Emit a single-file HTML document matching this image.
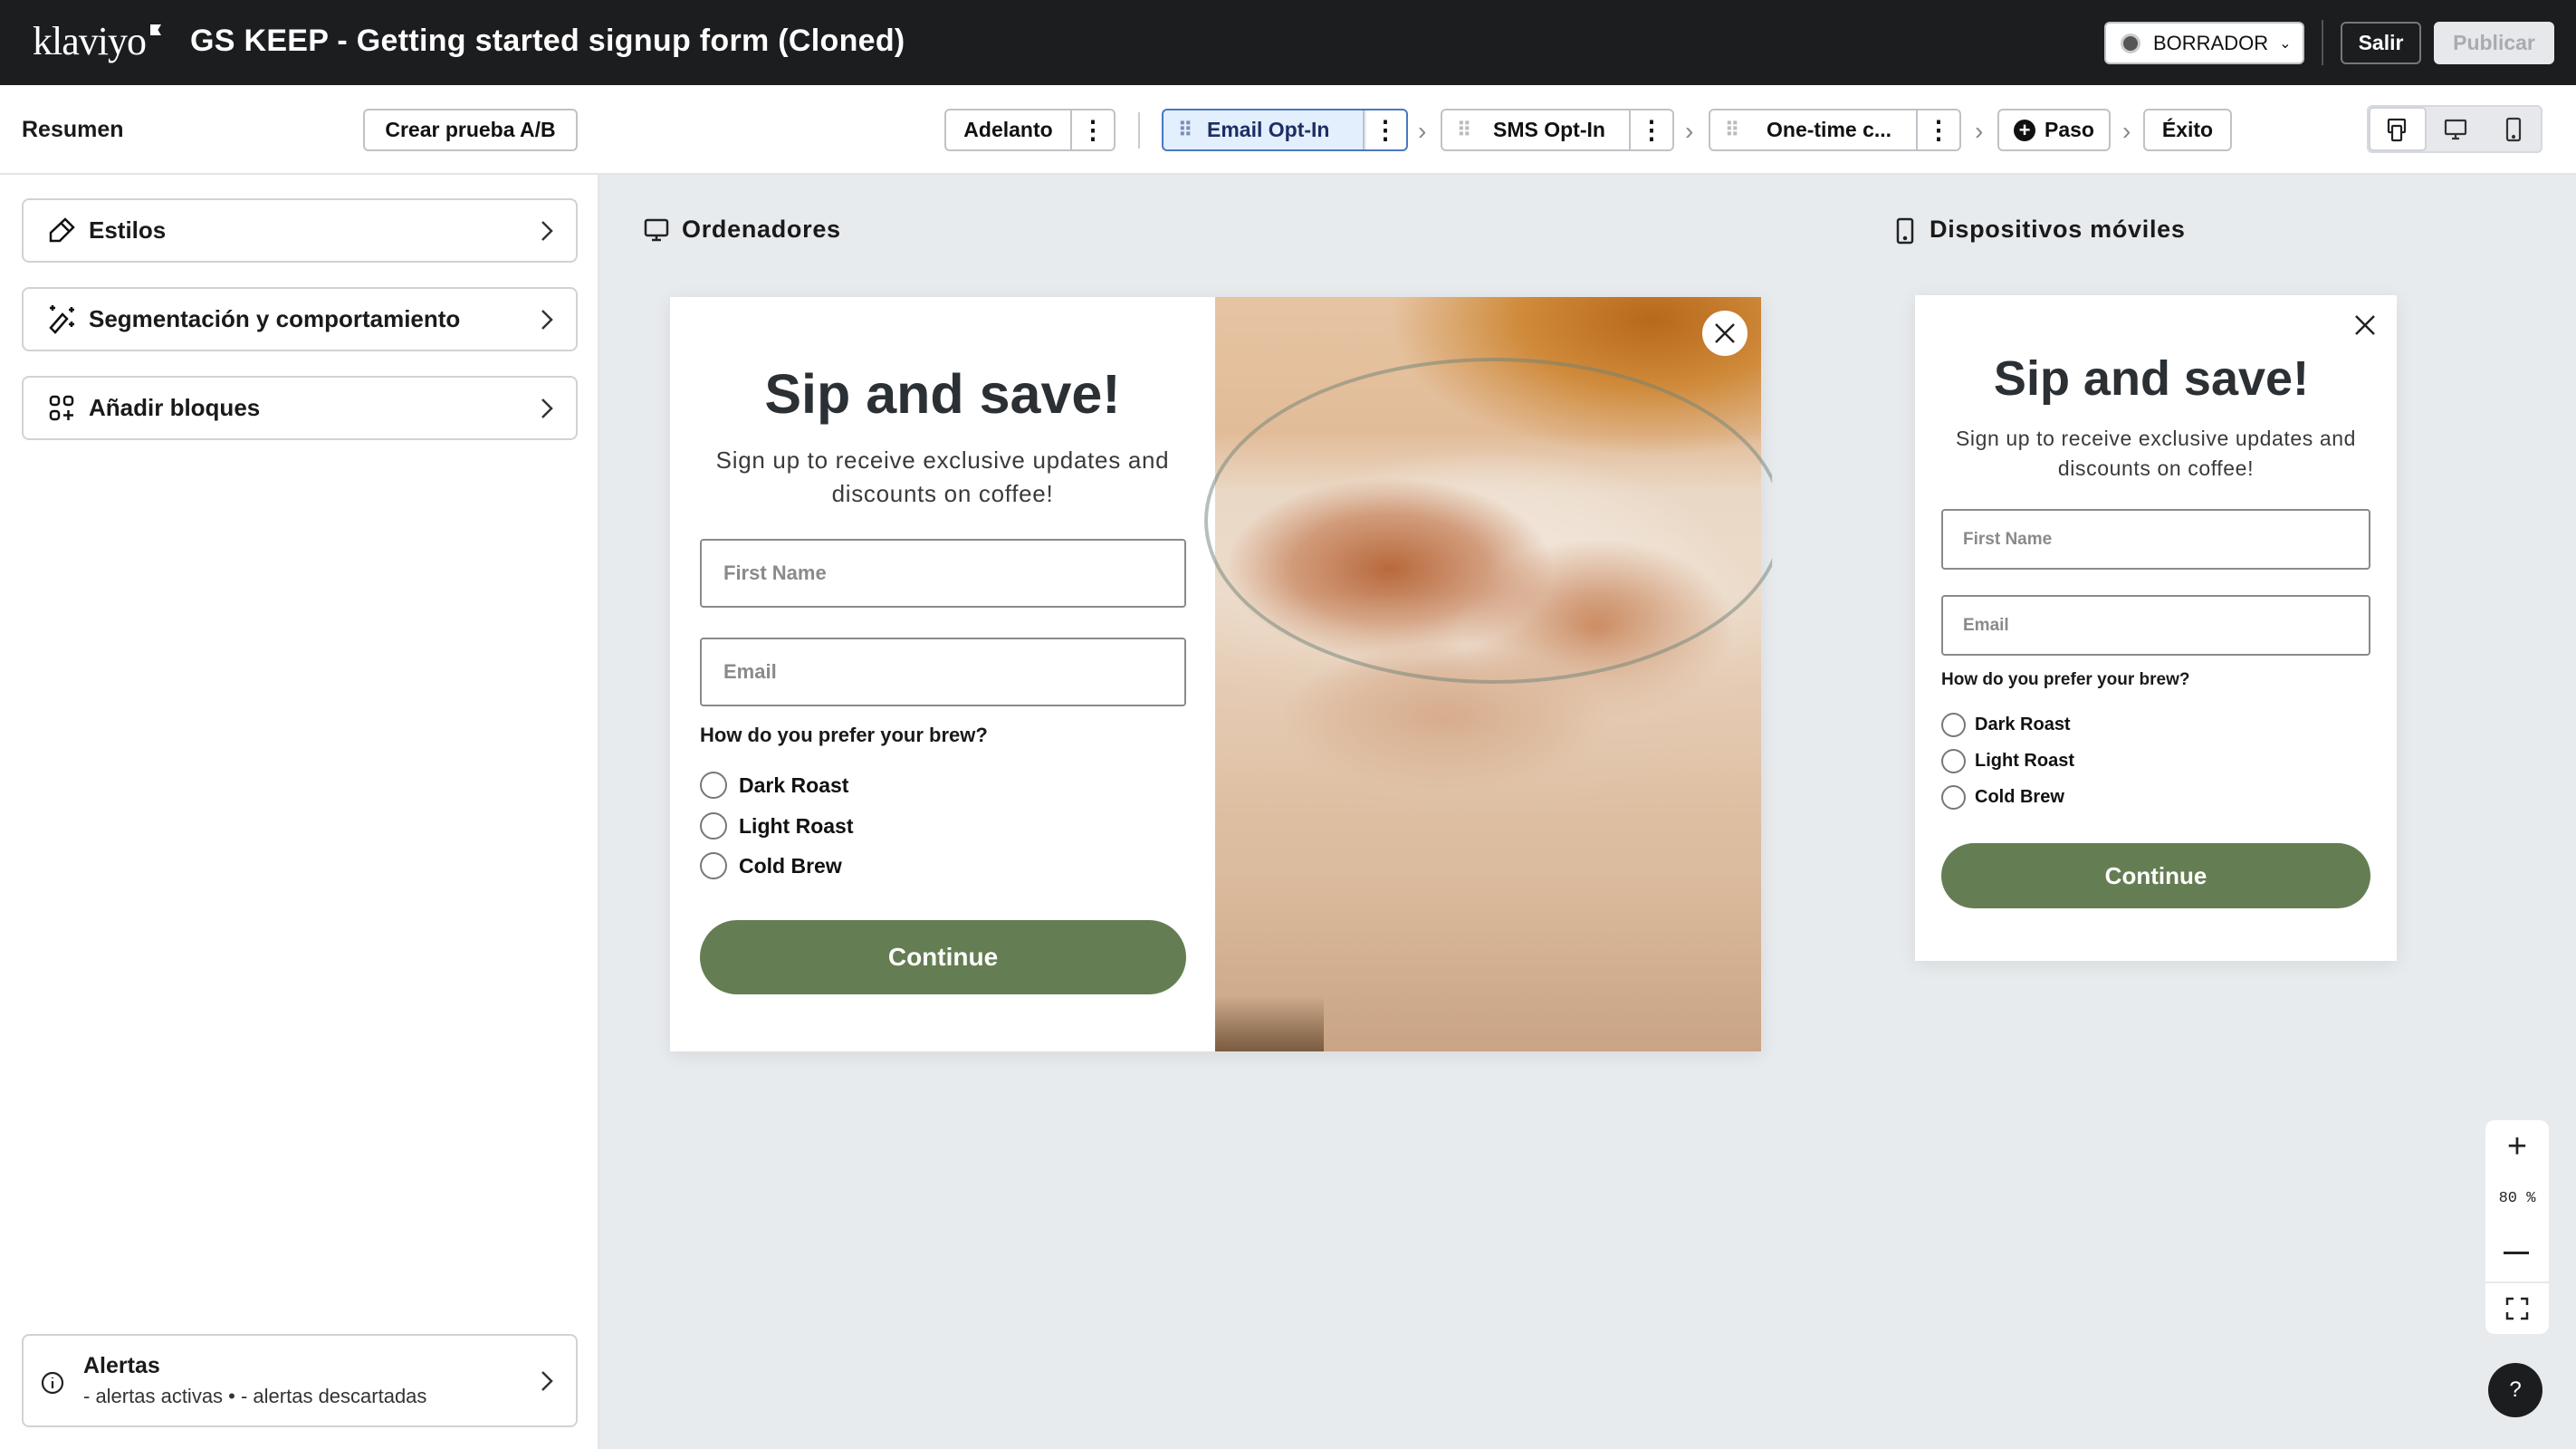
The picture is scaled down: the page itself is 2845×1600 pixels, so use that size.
<!DOCTYPE html>
<html><head><meta charset="utf-8"><style>
*{box-sizing:border-box;margin:0;padding:0}
body{width:2845px;height:1600px;overflow:hidden;background:#e8ebee;font-family:"Liberation Sans",sans-serif;position:relative;color:#1a1a1a}
.a{position:absolute}
.hdr{left:0;top:0;width:2845px;height:94px;background:#1c1d1f}
.tb{left:0;top:94px;width:2845px;height:99px;background:#fff;border-bottom:2px solid #e2e4e7}
.side{left:0;top:193px;width:662px;height:1407px;background:#fff;border-right:2px solid #e2e4e7}
.btn{position:absolute;border:2px solid #bfc3c8;border-radius:6px;background:#fff;font-weight:bold;font-size:23px;display:flex;align-items:center;justify-content:center;color:#111}
.seg{position:absolute;border:2px solid #bfc3c8;border-radius:6px;background:#fff;font-weight:bold;font-size:23px;display:flex;align-items:center;color:#111}
.dots{width:48px;height:100%;display:flex;align-items:center;justify-content:center;border-left:2px solid #bfc3c8;font-size:28px}
.chev{position:absolute;top:129px;color:#888;font-size:28px}
.item{position:absolute;left:24px;width:614px;height:71px;border:2px solid #cfd3d7;border-radius:8px;background:#fff;display:flex;align-items:center;font-weight:bold;font-size:26px}
.item .ic{width:72px;display:flex;justify-content:center;padding-left:12px}
.item .arr{position:absolute;right:22px;top:18px}
.input{position:absolute;border:2px solid #8a8a8a;border-radius:4px;background:#fff;color:#8a8a8a;font-weight:bold;display:flex;align-items:center}
.radio{position:absolute;border:2px solid #777;border-radius:50%}
.rl{position:absolute;font-weight:bold;color:#111}
.cont{position:absolute;background:#657d53;border-radius:50px;color:#fff;font-weight:bold;display:flex;align-items:center;justify-content:center}
</style></head><body>
<div class="a hdr"></div>
<div class="a" style="left:36px;top:20px;color:#fff;font-family:'Liberation Serif',serif;font-size:44px;letter-spacing:-1px">klaviyo</div>
<div class="a" style="left:166px;top:27px;width:12px;height:12px;background:#fff;clip-path:polygon(0 0,100% 0,70% 50%,100% 100%,0 100%)"></div>
<div class="a" style="left:210px;top:26px;color:#fff;font-weight:bold;font-size:34px;letter-spacing:0.3px">GS KEEP - Getting started signup form (Cloned)</div>
<div class="btn" style="left:2324px;top:24px;width:221px;height:47px;font-weight:normal;font-size:22px;justify-content:flex-start;padding-left:16px"><span style="display:inline-block;width:22px;height:22px;border-radius:50%;background:#555;border:3px solid #ccc;margin-right:14px"></span>BORRADOR <span style="margin-left:12px;font-size:16px">&#8964;</span></div>
<div class="a" style="left:2564px;top:22px;width:2px;height:50px;background:#555"></div>
<div class="btn" style="left:2585px;top:24px;width:89px;height:47px;background:#1c1d1f;color:#fff;border-color:#777">Salir</div>
<div class="btn" style="left:2688px;top:24px;width:133px;height:47px;background:#e6e8eb;color:#a8acb1;border-color:#e6e8eb">Publicar</div>

<div class="a tb"></div>
<div class="a side"></div>
<div class="a" style="left:24px;top:129px;font-weight:bold;font-size:25px">Resumen</div>
<div class="btn" style="left:401px;top:120px;width:237px;height:47px">Crear prueba A/B</div>

<div class="seg" style="left:1043px;top:120px;width:189px;height:47px"><span style="flex:1;text-align:center">Adelanto</span><span class="dots">⋮</span></div>
<div class="a" style="left:1257px;top:124px;width:2px;height:40px;background:#ccc"></div>
<div class="seg" style="left:1283px;top:120px;width:272px;height:47px;background:linear-gradient(90deg,#e3effc 0,#e3effc 224px,#fff 224px);border-color:#4a78c2"><span style="width:48px;text-align:center;color:#7a8fb0;font-size:22px">⠿</span><span style="flex:1;color:#1d2e66">Email Opt-In</span><span class="dots" style="border-color:#bfc3c8">⋮</span></div>
<div class="chev" style="left:1566px">›</div>
<div class="seg" style="left:1591px;top:120px;width:258px;height:47px"><span style="width:48px;text-align:center;color:#bbb;font-size:22px">⠿</span><span style="flex:1;padding-left:8px">SMS Opt-In</span><span class="dots">⋮</span></div>
<div class="chev" style="left:1861px">›</div>
<div class="seg" style="left:1887px;top:120px;width:279px;height:47px"><span style="width:48px;text-align:center;color:#bbb;font-size:22px">⠿</span><span style="flex:1;padding-left:14px">One-time c...</span><span class="dots">⋮</span></div>
<div class="chev" style="left:2181px">›</div>
<div class="btn" style="left:2206px;top:120px;width:125px;height:47px"><span style="display:inline-flex;width:24px;height:24px;border-radius:50%;background:#111;color:#fff;font-size:22px;align-items:center;justify-content:center;margin-right:10px;line-height:1">+</span>Paso</div>
<div class="chev" style="left:2344px">›</div>
<div class="btn" style="left:2367px;top:120px;width:98px;height:47px">Éxito</div>
<div class="a" style="left:2614px;top:116px;width:194px;height:53px;background:#e6e8eb;border-radius:6px;border:2px solid #d6d9dd"></div>
<div class="a" style="left:2616px;top:118px;width:64px;height:49px;background:#fff;border-radius:5px;border:2px solid #cfd3d7"></div>
<svg class="a" style="left:2634px;top:129px" width="28" height="28" viewBox="0 0 28 28" fill="none" stroke="#222" stroke-width="2.2"><rect x="4" y="3" width="18" height="14" rx="1"/><rect x="8" y="10" width="10" height="16" rx="1" fill="#fff"/></svg>
<svg class="a" style="left:2698px;top:129px" width="28" height="28" viewBox="0 0 28 28" fill="none" stroke="#333" stroke-width="2.2"><rect x="3" y="4" width="22" height="15" rx="1"/><path d="M10 24h8M14 19v5"/></svg>
<svg class="a" style="left:2764px;top:128px" width="24" height="30" viewBox="0 0 24 30" fill="none" stroke="#333" stroke-width="2.2"><rect x="5" y="3" width="14" height="24" rx="2"/><circle cx="12" cy="23" r="1" fill="#333"/></svg>

<div class="item" style="top:219px"><span class="ic"><svg width="32" height="32" viewBox="0 0 32 32" fill="none" stroke="#111" stroke-width="2.5"><path d="M20 3l9 9-15 15H4v-9z M16 8l9 9"/></svg></span>Estilos<span class="arr"><svg width="20" height="32" viewBox="0 0 20 32" fill="none" stroke="#333" stroke-width="2.5"><path d="M5 6l10 10-10 10"/></svg></span></div>
<div class="item" style="top:317px"><span class="ic"><svg width="34" height="36" viewBox="0 0 34 36" fill="none" stroke="#111" stroke-width="2.5"><path d="M18 12l5 5-13 15-5-5z M7 2v6M4 5h6M28 4v6M25 7h6M28 20v6M25 23h6"/></svg></span>Segmentación y comportamiento<span class="arr"><svg width="20" height="32" viewBox="0 0 20 32" fill="none" stroke="#333" stroke-width="2.5"><path d="M5 6l10 10-10 10"/></svg></span></div>
<div class="item" style="top:415px"><span class="ic"><svg width="30" height="32" viewBox="0 0 30 32" fill="none" stroke="#111" stroke-width="2.5"><rect x="3" y="3" width="9" height="9" rx="3"/><rect x="18" y="3" width="9" height="9" rx="3"/><rect x="3" y="19" width="9" height="9" rx="3"/><path d="M22.5 18v11M17 23.5h11"/></svg></span>Añadir bloques<span class="arr"><svg width="20" height="32" viewBox="0 0 20 32" fill="none" stroke="#333" stroke-width="2.5"><path d="M5 6l10 10-10 10"/></svg></span></div>

<div class="item" style="top:1473px;height:103px;align-items:flex-start;flex-direction:column;justify-content:center;padding-left:66px;font-size:25px">
<svg class="a" style="left:18px;top:38px" width="28" height="28" viewBox="0 0 28 28" fill="none" stroke="#222" stroke-width="2.2"><circle cx="14" cy="14" r="11"/><path d="M14 12v8M14 8v1"/></svg>
<div>Alertas</div><div style="font-weight:normal;font-size:22px;color:#333;margin-top:6px">- alertas activas • - alertas descartadas</div>
<span class="arr" style="top:34px"><svg width="20" height="32" viewBox="0 0 20 32" fill="none" stroke="#333" stroke-width="2.5"><path d="M5 6l10 10-10 10"/></svg></span></div>

<!-- Desktop -->
<svg class="a" style="left:711px;top:240px" width="28" height="28" viewBox="0 0 28 28" fill="none" stroke="#222" stroke-width="2.5"><rect x="2" y="3" width="24" height="17" rx="2"/><path d="M9 25h10M14 20v5"/></svg>
<div class="a" style="left:753px;top:238px;font-weight:bold;font-size:27px;letter-spacing:0.7px">Ordenadores</div>
<div class="a" style="left:740px;top:328px;width:1205px;height:833px;background:#fff;box-shadow:0 4px 20px rgba(0,0,0,0.08)"></div>
<div class="a" style="left:740px;top:400px;width:602px;text-align:center;font-weight:bold;font-size:61px;color:#2b3035">Sip and save!</div>
<div class="a" style="left:750px;top:490px;width:582px;text-align:center;font-size:26px;letter-spacing:0.7px;line-height:37px;color:#3a3a3a">Sign up to receive exclusive updates and discounts on coffee!</div>
<div class="input" style="left:773px;top:595px;width:537px;height:76px;padding-left:24px;font-size:22px">First Name</div>
<div class="input" style="left:773px;top:704px;width:537px;height:76px;padding-left:24px;font-size:22px">Email</div>
<div class="a" style="left:773px;top:799px;font-weight:bold;font-size:22px">How do you prefer your brew?</div>
<div class="radio" style="left:773px;top:852px;width:30px;height:30px"></div><div class="rl" style="left:816px;top:854px;font-size:23px">Dark Roast</div>
<div class="radio" style="left:773px;top:897px;width:30px;height:30px"></div><div class="rl" style="left:816px;top:899px;font-size:23px">Light Roast</div>
<div class="radio" style="left:773px;top:941px;width:30px;height:30px"></div><div class="rl" style="left:816px;top:943px;font-size:23px">Cold Brew</div>
<div class="cont" style="left:773px;top:1016px;width:537px;height:82px;font-size:28px">Continue</div>
<div class="a" style="left:1342px;top:328px;width:603px;height:833px;overflow:hidden;background:
radial-gradient(ellipse 30% 12% at 32% 36%,#b8693c 0,rgba(190,110,65,0.6) 60%,transparent 100%),
radial-gradient(ellipse 30% 10% at 42% 56%,#bb6c3e 0,rgba(190,110,65,0.5) 60%,transparent 100%),
radial-gradient(ellipse 25% 12% at 70% 44%,#c47a4c 0,transparent 100%),
radial-gradient(ellipse 50% 25% at 50% 45%,#f4ece4 0,#efe2d4 70%,transparent 100%),
radial-gradient(ellipse 48% 18% at 80% 3%,#b8681a 0,#cf8a3a 50%,transparent 100%),
linear-gradient(180deg,#e6c4a2 0,#e2bc98 18%,#ead8c6 26%,#efe0d0 60%,#e0c4aa 70%,#d8b898 88%,#b08a6a 100%)"></div>
<div class="a" style="left:1342px;top:655px;width:603px;height:506px;background:linear-gradient(180deg,rgba(230,200,175,0) 0,rgba(225,195,168,0.7) 20%,#dcbc9e 60%,#c9a485 100%)"></div>
<div class="a" style="left:1330px;top:395px;width:640px;height:360px;border:4px solid rgba(110,130,120,0.5);border-radius:50%;clip-path:inset(0 2% 0 0)"></div>
<div class="a" style="left:1342px;top:1100px;width:120px;height:61px;background:linear-gradient(180deg,rgba(120,90,60,0),#7a5c40)"></div>
<div class="a" style="left:1880px;top:343px;width:50px;height:50px;border-radius:50%;background:#fff"></div>
<svg class="a" style="left:1892px;top:355px" width="26" height="26" viewBox="0 0 26 26" stroke="#222" stroke-width="2.5"><path d="M3 3l20 20M23 3L3 23"/></svg>

<!-- Mobile -->
<svg class="a" style="left:2093px;top:240px" width="22" height="30" viewBox="0 0 22 30" fill="none" stroke="#222" stroke-width="2.5"><rect x="3" y="2" width="16" height="26" rx="2"/><circle cx="11" cy="23" r="1" fill="#222"/></svg>
<div class="a" style="left:2131px;top:238px;font-weight:bold;font-size:27px;letter-spacing:0.7px">Dispositivos móviles</div>
<div class="a" style="left:2115px;top:326px;width:532px;height:735px;background:#fff;box-shadow:0 4px 20px rgba(0,0,0,0.08)"></div>
<svg class="a" style="left:2600px;top:347px" width="24" height="24" viewBox="0 0 24 24" stroke="#222" stroke-width="2.5"><path d="M2 2l20 20M22 2L2 22"/></svg>
<div class="a" style="left:2115px;top:387px;width:522px;text-align:center;font-weight:bold;font-size:54px;color:#2b3035">Sip and save!</div>
<div class="a" style="left:2130px;top:468px;width:502px;text-align:center;font-size:23px;letter-spacing:0.6px;line-height:33px;color:#3a3a3a">Sign up to receive exclusive updates and discounts on coffee!</div>
<div class="input" style="left:2144px;top:562px;width:474px;height:67px;padding-left:22px;font-size:19px">First Name</div>
<div class="input" style="left:2144px;top:657px;width:474px;height:67px;padding-left:22px;font-size:19px">Email</div>
<div class="a" style="left:2144px;top:740px;font-weight:bold;font-size:19px">How do you prefer your brew?</div>
<div class="radio" style="left:2144px;top:787px;width:27px;height:27px"></div><div class="rl" style="left:2181px;top:789px;font-size:20px">Dark Roast</div>
<div class="radio" style="left:2144px;top:827px;width:27px;height:27px"></div><div class="rl" style="left:2181px;top:829px;font-size:20px">Light Roast</div>
<div class="radio" style="left:2144px;top:867px;width:27px;height:27px"></div><div class="rl" style="left:2181px;top:869px;font-size:20px">Cold Brew</div>
<div class="cont" style="left:2144px;top:931px;width:474px;height:72px;font-size:26px">Continue</div>

<!-- zoom controls -->
<div class="a" style="left:2745px;top:1237px;width:70px;height:236px;background:#fff;border-radius:10px"></div>
<div class="a" style="left:2745px;top:1237px;width:70px;height:58px;display:flex;align-items:center;justify-content:center;font-size:38px;color:#222">+</div>
<div class="a" style="left:2745px;top:1314px;width:70px;text-align:center;font-family:'Liberation Mono',monospace;font-size:17px;color:#222">80 %</div>
<div class="a" style="left:2765px;top:1382px;width:28px;height:3px;background:#222"></div>
<div class="a" style="left:2745px;top:1415px;width:70px;height:2px;background:#e6e8eb"></div>
<svg class="a" style="left:2767px;top:1432px" width="26" height="26" viewBox="0 0 26 26" fill="none" stroke="#222" stroke-width="2.5"><path d="M2 9V2h7M17 2h7v7M24 17v7h-7M9 24H2v-7"/></svg>
<div class="a" style="left:2748px;top:1505px;width:60px;height:60px;border-radius:50%;background:#1c1d1f;color:#fff;font-size:24px;display:flex;align-items:center;justify-content:center">?</div>
</body></html>
